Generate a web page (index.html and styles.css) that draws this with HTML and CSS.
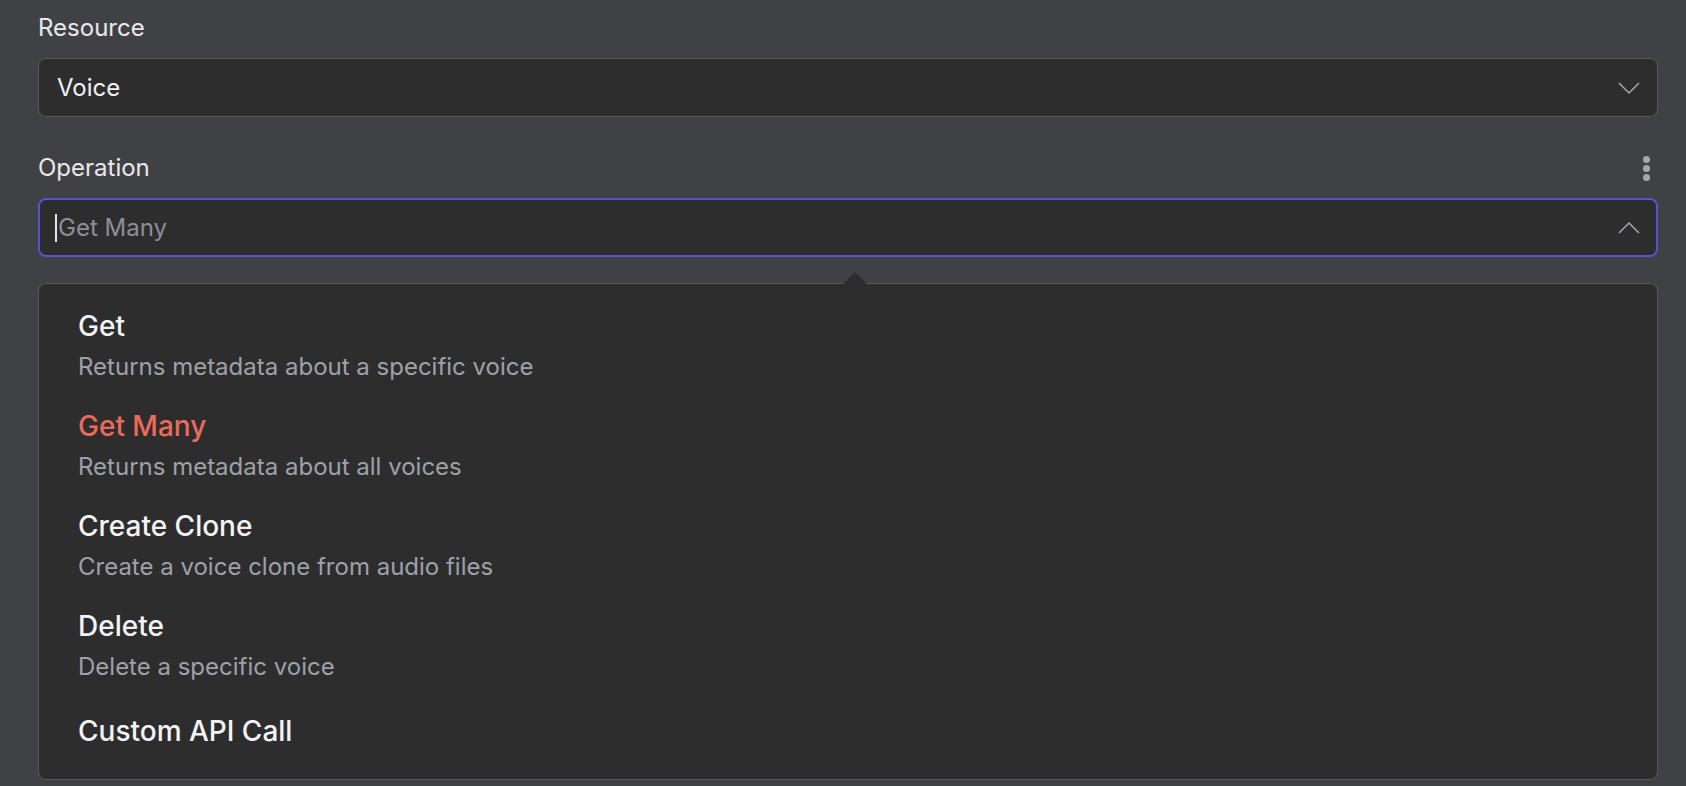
FILE: index.html
```html
<!DOCTYPE html>
<html>
<head>
<meta charset="utf-8">
<link rel="stylesheet" href="styles.css">
</head>
<body>
<div class="panel">
  <div class="field">
    <div class="label-row"><span class="label">Resource</span></div>
    <div class="select">
      <span class="value">Voice</span>
      <svg class="chev" width="22" height="12" viewBox="0 0 22 12"><path d="M1 1 L11 11 L21 1" fill="none" stroke="#a3a5ad" stroke-width="1.5"/></svg>
    </div>
  </div>
  <div class="field op">
    <div class="label-row">
      <span class="label">Operation</span>
      <span class="dots"><i></i><i></i><i></i></span>
    </div>
    <div class="select focused">
      <span class="caret"></span><span class="placeholder">Get Many</span>
      <svg class="chev" width="22" height="12" viewBox="0 0 22 12"><path d="M1 11 L11 1 L21 11" fill="none" stroke="#a3a5ad" stroke-width="1.5"/></svg>
    </div>
  </div>
  <div class="popup">
    <ul class="menu">
      <li class="item"><div class="title">Get</div><div class="desc">Returns metadata about a specific voice</div></li>
      <li class="item selected"><div class="title">Get Many</div><div class="desc">Returns metadata about all voices</div></li>
      <li class="item"><div class="title">Create Clone</div><div class="desc">Create a voice clone from audio files</div></li>
      <li class="item"><div class="title">Delete</div><div class="desc">Delete a specific voice</div></li>
      <li class="item single"><div class="title">Custom API Call</div></li>
    </ul>
  </div>
</div>
</body>
</html>
```
FILE: styles.css
```css
html, body {
  margin: 0;
  padding: 0;
  background: #404144;
  font-family: Inter, "Noto Sans", sans-serif;
  color: #f1f1f3;
}
.panel {
  padding: 13px 28px 0 38px;
  display: flex;
  flex-direction: column;
}
.field { display: flex; flex-direction: column; gap: 15px; }
.field.op { margin-top: 36px; }
.label-row {
  display: flex;
  justify-content: space-between;
  align-items: center;
  height: 30px;
}
.label {
  font-size: 24px;
  line-height: 30px;
  color: #e9e9ec;
}
.dots {
  display: flex;
  flex-direction: column;
  gap: 2px;
  margin-right: 8px;
}
.dots i {
  display: block;
  width: 7px;
  height: 7px;
  border-radius: 50%;
  background: #a4a7b2;
}
.select {
  box-sizing: border-box;
  height: 59px;
  background: #2d2d2d;
  border: 1px solid #58595c;
  border-radius: 8px;
  display: flex;
  align-items: center;
  padding: 0 17px 0 18px;
}
.select.focused { border: 2px solid #5c4fd0; padding: 0 16px 0 15px; }
.value, .placeholder {
  font-size: 24px;
  flex: 1;
}
.value { color: #f1f1f3; }
.placeholder { color: #8d8f98; padding-left: 1px; }
.caret {
  width: 2px;
  height: 28px;
  background: #e6e6e6;
}
.chev { flex: none; }
.popup {
  position: relative;
  margin-top: 26px;
  background: #2d2d2d;
  border: 1px solid #58595c;
  border-radius: 8px;
  padding: 10px 0 16px;
}
.popup::before {
  content: "";
  position: absolute;
  top: -12px;
  left: 804px;
  border-left: 12px solid transparent;
  border-right: 12px solid transparent;
  border-bottom: 12px solid #2d2d2d;
}
.menu { list-style: none; margin: 0; padding: 0; }
.item { padding: 15px 39px 12px; }
.title {
  font-size: 28px;
  font-weight: 500;
  line-height: 34px;
  color: #f3f3f5;
}
.selected .title { color: #ec6a5c; }
.desc {
  margin-top: 9px;
  font-size: 24px;
  line-height: 30px;
  color: #9fa1aa;
}
.single { padding-top: 20px; padding-bottom: 15px; }
```
